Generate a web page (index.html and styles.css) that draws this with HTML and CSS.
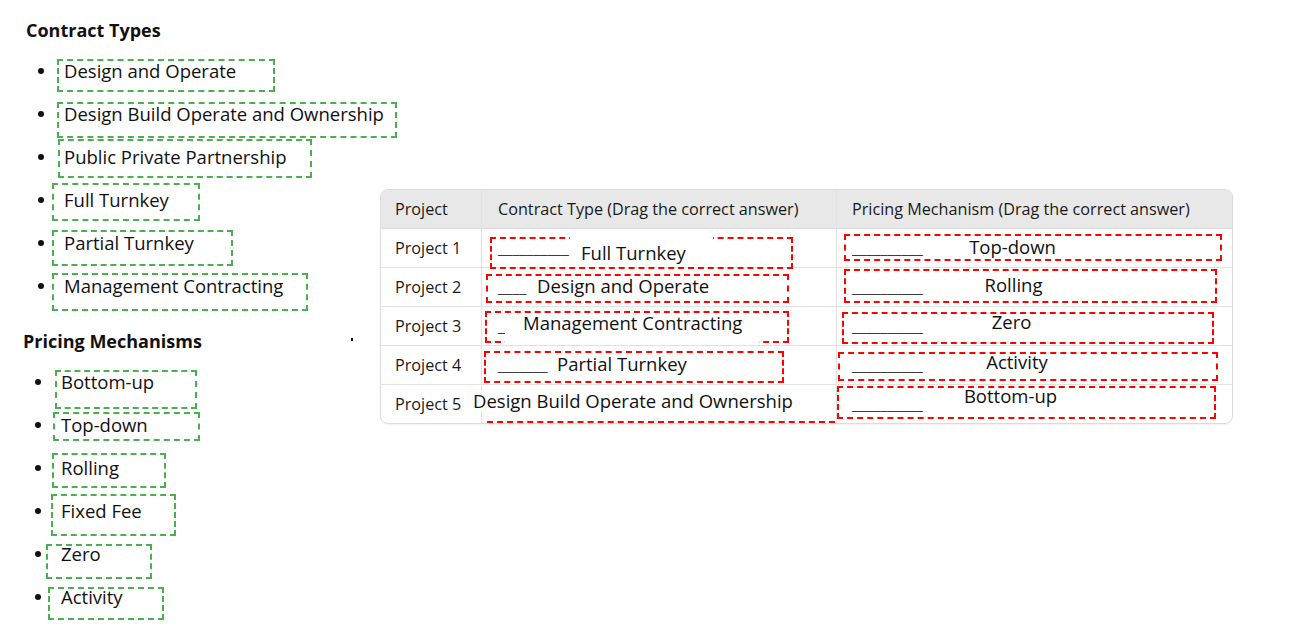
FILE: index.html
```html
<!DOCTYPE html>
<html lang="en">
<head>
<meta charset="utf-8">
<title>Contract Types and Pricing Mechanisms</title>
<link rel="stylesheet" href="styles.css">
</head>
<body>
<div class="page">
  <aside class="bank">
    <section class="group group-contract">
      <h3 class="group-title">Contract Types</h3>
      <ul class="chips">
        <li class="chip-row"><span class="chip c1">Design and Operate</span></li>
        <li class="chip-row"><span class="chip c2">Design Build Operate and Ownership</span></li>
        <li class="chip-row"><span class="chip c3">Public Private Partnership</span></li>
        <li class="chip-row"><span class="chip c4">Full Turnkey</span></li>
        <li class="chip-row"><span class="chip c5">Partial Turnkey</span></li>
        <li class="chip-row"><span class="chip c6">Management Contracting</span></li>
      </ul>
    </section>
    <section class="group group-pricing">
      <div class="group-head">
        <h3 class="group-title">Pricing Mechanisms</h3>
        <span class="stray-dot"></span>
      </div>
      <ul class="chips">
        <li class="chip-row"><span class="chip p1">Bottom-up</span></li>
        <li class="chip-row"><span class="chip p2">Top-down</span></li>
        <li class="chip-row"><span class="chip p3">Rolling</span></li>
        <li class="chip-row"><span class="chip p4">Fixed Fee</span></li>
        <li class="chip-row"><span class="chip p5">Zero</span></li>
        <li class="chip-row"><span class="chip p6">Activity</span></li>
      </ul>
    </section>
  </aside>

  <main class="board">
    <div class="tbl">
      <div class="cell head head-first col-project">Project</div>
      <div class="cell head col-contract">Contract Type (Drag the correct answer)</div>
      <div class="cell head head-last col-pricing cell-end">Pricing Mechanism (Drag the correct answer)</div>

      <div class="cell col-project">Project 1</div>
      <div class="cell col-contract"><span class="blank">__________</span>
        <div class="drop dc1"><span class="drop-label">Full Turnkey</span></div></div>
      <div class="cell col-pricing cell-end"><span class="blank">__________</span>
        <div class="drop dp1"><span class="drop-label">Top-down</span></div></div>

      <div class="cell col-project">Project 2</div>
      <div class="cell col-contract"><span class="blank">____</span>
        <div class="drop dc2"><span class="drop-label">Design and Operate</span></div></div>
      <div class="cell col-pricing cell-end"><span class="blank">__________</span>
        <div class="drop dp2"><span class="drop-label">Rolling</span></div></div>

      <div class="cell col-project">Project 3</div>
      <div class="cell col-contract"><span class="blank">__</span>
        <div class="drop dc3"><span class="drop-label">Management Contracting</span></div></div>
      <div class="cell col-pricing cell-end"><span class="blank">__________</span>
        <div class="drop dp3"><span class="drop-label">Zero</span></div></div>

      <div class="cell col-project">Project 4</div>
      <div class="cell col-contract"><span class="blank">_______</span>
        <div class="drop dc4"><span class="drop-label">Partial Turnkey</span></div></div>
      <div class="cell col-pricing cell-end"><span class="blank">__________</span>
        <div class="drop dp4"><span class="drop-label">Activity</span></div></div>

      <div class="cell col-project cell-bottom">Project 5</div>
      <div class="cell col-contract cell-bottom">
        <div class="drop dc5"><span class="drop-label">Design Build Operate and Ownership</span></div></div>
      <div class="cell col-pricing cell-end cell-bottom"><span class="blank">__________</span>
        <div class="drop dp5"><span class="drop-label">Bottom-up</span></div></div>
    </div>
  </main>
</div>
</body>
</html>
```

FILE: styles.css
```css
* { box-sizing: border-box; }

body {
  margin: 0;
  font-family: "Open Sans", "Noto Sans", "DejaVu Sans", sans-serif;
  color: #111;
  background: #fff;
}

.page {
  display: flex;
  align-items: flex-start;
  width: 1314px;
  height: 628px;
  overflow: hidden;
}

/* ---------- left bank of draggable answers ---------- */
.bank {
  width: 380px;
  flex: none;
  padding-top: 18px;
}

.group-contract { padding-left: 26px; }
.group-pricing { padding-left: 23px; margin-top: 22px; }

.group-title {
  margin: 0;
  height: 24px;
  line-height: 24px;
  font-size: 18px;
  font-weight: 700;
  white-space: nowrap;
}

.group-head {
  display: flex;
  align-items: center;
  justify-content: space-between;
  width: 330px;
}

.stray-dot {
  width: 2px;
  height: 3px;
  background: #000;
  margin-top: -3px;
}

.chips {
  list-style: none;
  margin: 7px 0 0;
  padding: 0;
}

.chip-row {
  display: flex;
  align-items: center;
  height: 43px;
}

.chip-row::before {
  content: "";
  flex: none;
  width: 6px;
  height: 6px;
  border-radius: 50%;
  background: #111;
  margin-left: 12px;
  margin-right: 20px;
}

.chip {
  position: relative;
  height: 30px;
  line-height: 30px;
  font-size: 18.5px;
  font-weight: 500;
  white-space: nowrap;
}

.chip::after {
  content: "";
  position: absolute;
  border: 2px dashed #4caf50;
}

.c1::after { left: -7px;  top: 3px;  width: 214px; height: 29px; }
.c2::after { left: -7px;  top: 3px;  width: 336px; height: 32px; }
.c3::after { left: -6px;  top: -3px; width: 250px; height: 35px; }
.c4::after { left: -12px; top: -2px; width: 144px; height: 34px; }
.c5::after { left: -12px; top: 2px;  width: 177px; height: 32px; }
.c6::after { left: -12px; top: 2px;  width: 252px; height: 34px; }

.p1::after { left: -6px;  top: 3px;  width: 138px; height: 35px; }
.p2::after { left: -8px;  top: 2px;  width: 143px; height: 25px; }
.p3::after { left: -9px;  top: 0;    width: 110px; height: 31px; }
.p4::after { left: -10px; top: -2px; width: 121px; height: 38px; }
.p5::after { left: -15px; top: 5px;  width: 102px; height: 31px; }
.p6::after { left: -13px; top: 5px;  width: 112px; height: 29px; }

/* ---------- matching table ---------- */
.board {
  flex: none;
  width: 853px;
  padding-top: 189px;
}

.tbl {
  display: grid;
  grid-template-columns: 101px 355px 395px;
  border: 1px solid #dcdcdc;
  border-radius: 8px;
  box-shadow: 0 1px 2px rgba(0, 0, 0, 0.06);
  font-size: 16.2px;
  color: #1a1a1a;
}

.cell {
  position: relative;
  height: 39px;
  display: flex;
  align-items: center;
  white-space: nowrap;
  border-right: 1px solid #e2e2e2;
  border-bottom: 1px solid #e2e2e2;
}

.cell-end { border-right: none; }
.cell-bottom { border-bottom: none; height: 38px; }

.head { background: #e8e8e8; border-bottom-color: #dcdcdc; }
.head-first { border-top-left-radius: 7px; }
.head-last { border-top-right-radius: 7px; }

.col-project { padding-left: 14px; }
.col-contract { padding-left: 16px; }
.col-pricing { padding-left: 15px; }

.blank { color: #3a3a3a; }

/* dropped answers lying over the cells */
.drop {
  position: absolute;
  border: 2px dashed #f00;
  font-size: 18.5px;
  font-weight: 500;
  color: #111;
}

.drop-label {
  position: absolute;
  line-height: 20px;
  white-space: nowrap;
}

.dc1 { left: 8px; top: 8px; width: 303px; height: 32px; }
.dc1 .drop-label { left: 78px; top: -3px; padding: 7px 27px 3px 11px; background: #fff; }

.dc2 { left: 4px; top: 6px; width: 303px; height: 29px; }
.dc2 .drop-label { left: 49px; top: 0; }

.dc3 { left: 3px; top: 4px; width: 304px; height: 32px; }
.dc3 .drop-label { left: 18px; top: 0; padding: 0 17px 11px 18px; background: #fff; }

.dc4 { left: 2px; top: 5px; width: 300px; height: 32px; }
.dc4 .drop-label { left: 71px; top: 1px; }

.dc5 { left: 5px; top: 0; width: 348px; height: 38px; border-width: 0 0 2px 0; }
.dc5 .drop-label { left: -14px; top: 6px; background: #fff; }

.dp1, .dp2, .dp3, .dp4, .dp5 { text-align: center; }
.dp1 .drop-label, .dp2 .drop-label, .dp3 .drop-label,
.dp4 .drop-label, .dp5 .drop-label { left: 0; }

.dp1 { left: 7px; top: 5px; width: 378px; height: 27px; }
.dp1 .drop-label { width: 333px; top: 1px; }

.dp2 { left: 7px; top: 1px; width: 373px; height: 34px; }
.dp2 .drop-label { width: 335px; top: 4px; }

.dp3 { left: 5px; top: 5px; width: 372px; height: 32px; }
.dp3 .drop-label { width: 335px; top: -2px; }

.dp4 { left: 1px; top: 6px; width: 380px; height: 29px; }
.dp4 .drop-label { width: 354px; top: -2px; }

.dp5 { left: 0; top: 1px; width: 379px; height: 33px; }
.dp5 .drop-label { width: 343px; top: -2px; }
```
